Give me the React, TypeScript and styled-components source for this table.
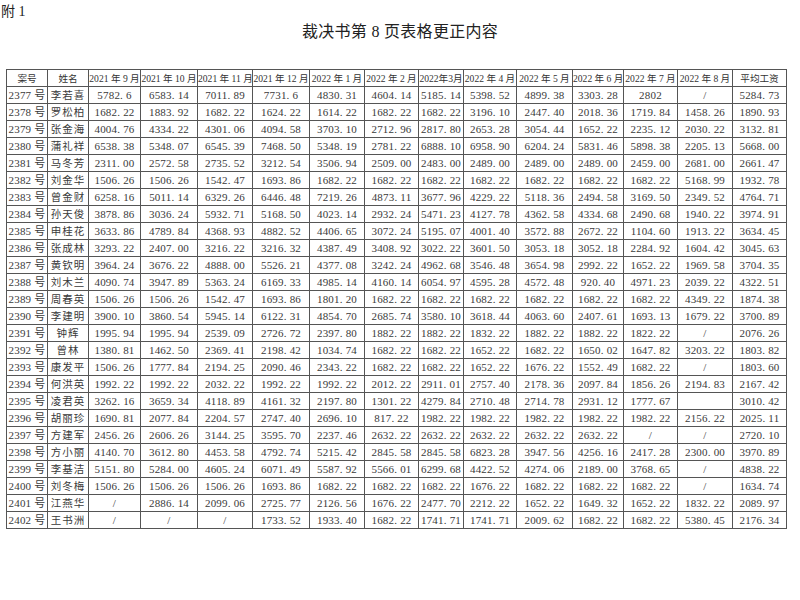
import React from "react";
import styled, { createGlobalStyle } from "styled-components";

const GlobalStyle = createGlobalStyle`
  html, body {
    margin: 0;
    padding: 0;
    background: #ffffff;
  }
  body {
    font-family: "Liberation Serif", "Noto Sans CJK SC", serif;
    color: #333;
  }
`;

const Page = styled.div`
  width: 800px;
  height: 600px;
  position: relative;
  overflow: hidden;
  background: #fff;
`;

const Annex = styled.div`
  font-size: 14px;
  line-height: 18px;
  padding: 3px 0 0 1px;
  height: 19px;
  color: #222;
`;

const Title = styled.h1`
  margin: 0;
  font-weight: normal;
  font-size: 16px;
  line-height: 20px;
  text-align: center;
  color: #222;
  letter-spacing: 0.3px;
`;

const TableWrap = styled.div`
  padding: 27px 0 0 6px;
`;

const Table = styled.table`
  border-collapse: collapse;
  table-layout: fixed;
  width: 780px;
`;

const Th = styled.th`
  border: 1px solid #555;
  height: 16px;
  padding: 0;
  font-weight: normal;
  font-size: 9.6px;
  line-height: 15px;
  text-align: center;
  white-space: nowrap;
  overflow: visible;
  color: #333;
`;

const Td = styled.td<{ $name?: boolean }>`
  border: 1px solid #555;
  height: 16px;
  padding: 0;
  font-size: ${(p) => (p.$name ? "10.5px" : "11px")};
  line-height: 15px;
  text-align: center;
  white-space: nowrap;
  color: #3a3a3a;
  letter-spacing: ${(p) => (p.$name ? "1px" : "0.2px")};
`;

const widths = [41, 41, 52, 57, 55, 57, 55, 54, 45, 53, 56, 51, 54, 55, 54];

const headers = [
  "案号",
  "姓名",
  "2021 年 9 月",
  "2021 年 10 月",
  "2021 年 11 月",
  "2021 年 12 月",
  "2022 年 1 月",
  "2022 年 2 月",
  "2022年3月",
  "2022 年 4 月",
  "2022 年 5 月",
  "2022 年 6 月",
  "2022 年 7 月",
  "2022 年 8 月",
  "平均工资",
];

const rows: string[][] = [
  ["2377", "李若喜", "5782.6", "6583.14", "7011.89", "7731.6", "4830.31", "4604.14", "5185.14", "5398.52", "4899.38", "3303.28", "2802", "/", "5284.73"],
  ["2378", "罗松柏", "1682.22", "1883.92", "1682.22", "1624.22", "1614.22", "1682.22", "1682.22", "3196.10", "2447.40", "2018.36", "1719.84", "1458.26", "1890.93"],
  ["2379", "张金海", "4004.76", "4334.22", "4301.06", "4094.58", "3703.10", "2712.96", "2817.80", "2653.28", "3054.44", "1652.22", "2235.12", "2030.22", "3132.81"],
  ["2380", "蒲礼祥", "6538.38", "5348.07", "6545.39", "7468.50", "5348.19", "2781.22", "6888.10", "6958.90", "6204.24", "5831.46", "5898.38", "2205.13", "5668.00"],
  ["2381", "马冬芳", "2311.00", "2572.58", "2735.52", "3212.54", "3506.94", "2509.00", "2483.00", "2489.00", "2489.00", "2489.00", "2459.00", "2681.00", "2661.47"],
  ["2382", "刘金华", "1506.26", "1506.26", "1542.47", "1693.86", "1682.22", "1682.22", "1682.22", "1682.22", "1682.22", "1682.22", "1682.22", "5168.99", "1932.78"],
  ["2383", "曾金财", "6258.16", "5011.14", "6329.26", "6446.48", "7219.26", "4873.11", "3677.96", "4229.22", "5118.36", "2494.58", "3169.50", "2349.52", "4764.71"],
  ["2384", "孙天俊", "3878.86", "3036.24", "5932.71", "5168.50", "4023.14", "2932.24", "5471.23", "4127.78", "4362.58", "4334.68", "2490.68", "1940.22", "3974.91"],
  ["2385", "申桂花", "3633.86", "4789.84", "4368.93", "4882.52", "4406.65", "3072.24", "5195.07", "4001.40", "3572.88", "2672.22", "1104.60", "1913.22", "3634.45"],
  ["2386", "张成林", "3293.22", "2407.00", "3216.22", "3216.32", "4387.49", "3408.92", "3022.22", "3601.50", "3053.18", "3052.18", "2284.92", "1604.42", "3045.63"],
  ["2387", "黄钦明", "3964.24", "3676.22", "4888.00", "5526.21", "4377.08", "3242.24", "4962.68", "3546.48", "3654.98", "2992.22", "1652.22", "1969.58", "3704.35"],
  ["2388", "刘木兰", "4090.74", "3947.89", "5363.24", "6169.33", "4985.14", "4160.14", "6054.97", "4595.28", "4572.48", "920.40", "4971.23", "2039.22", "4322.51"],
  ["2389", "周春英", "1506.26", "1506.26", "1542.47", "1693.86", "1801.20", "1682.22", "1682.22", "1682.22", "1682.22", "1682.22", "1682.22", "4349.22", "1874.38"],
  ["2390", "李建明", "3900.10", "3860.54", "5945.14", "6122.31", "4854.70", "2685.74", "3580.10", "3618.44", "4063.60", "2407.61", "1693.13", "1679.22", "3700.89"],
  ["2391", "钟辉", "1995.94", "1995.94", "2539.09", "2726.72", "2397.80", "1882.22", "1882.22", "1832.22", "1882.22", "1882.22", "1822.22", "/", "2076.26"],
  ["2392", "曾林", "1380.81", "1462.50", "2369.41", "2198.42", "1034.74", "1682.22", "1682.22", "1652.22", "1682.22", "1650.02", "1647.82", "3203.22", "1803.82"],
  ["2393", "康发平", "1506.26", "1777.84", "2194.25", "2090.46", "2343.22", "1682.22", "1682.22", "1652.22", "1676.22", "1552.49", "1682.22", "/", "1803.60"],
  ["2394", "何洪英", "1992.22", "1992.22", "2032.22", "1992.22", "1992.22", "2012.22", "2911.01", "2757.40", "2178.36", "2097.84", "1856.26", "2194.83", "2167.42"],
  ["2395", "凌君英", "3262.16", "3659.34", "4118.89", "4161.32", "2197.80", "1301.22", "4279.84", "2710.48", "2714.78", "2931.12", "1777.67", "", "3010.42"],
  ["2396", "胡丽珍", "1690.81", "2077.84", "2204.57", "2747.40", "2696.10", "817.22", "1982.22", "1982.22", "1982.22", "1982.22", "1982.22", "2156.22", "2025.11"],
  ["2397", "方建军", "2456.26", "2606.26", "3144.25", "3595.70", "2237.46", "2632.22", "2632.22", "2632.22", "2632.22", "2632.22", "/", "/", "2720.10"],
  ["2398", "方小丽", "4140.70", "3612.80", "4453.58", "4792.74", "5215.42", "2845.58", "2845.58", "6823.28", "3947.56", "4256.16", "2417.28", "2300.00", "3970.89"],
  ["2399", "李基洁", "5151.80", "5284.00", "4605.24", "6071.49", "5587.92", "5566.01", "6299.68", "4422.52", "4274.06", "2189.00", "3768.65", "/", "4838.22"],
  ["2400", "刘冬梅", "1506.26", "1506.26", "1506.26", "1693.86", "1682.22", "1682.22", "1682.22", "1676.22", "1682.22", "1682.22", "1682.22", "/", "1634.74"],
  ["2401", "江燕华", "/", "2886.14", "2099.06", "2725.77", "2126.56", "1676.22", "2477.70", "2212.22", "1652.22", "1649.32", "1652.22", "1832.22", "2089.97"],
  ["2402", "王书洲", "/", "/", "/", "1733.52", "1933.40", "1682.22", "1741.71", "1741.71", "2009.62", "1682.22", "1682.22", "5380.45", "2176.34"],
];

// "." in the scan sits like ", " so give numbers a little room
const fmt = (v: string) => v.replace(".", ". ");

export default function App() {
  return (
    <Page>
      <GlobalStyle />
      <Annex>附 1</Annex>
      <Title>裁决书第 8 页表格更正内容</Title>
      <TableWrap>
        <Table>
          <colgroup>
            {widths.map((w, i) => (
              <col key={i} style={{ width: w }} />
            ))}
          </colgroup>
          <thead>
            <tr>
              {headers.map((h) => (
                <Th key={h}>{h}</Th>
              ))}
            </tr>
          </thead>
          <tbody>
            {rows.map((r) => (
              <tr key={r[0]}>
                <Td>{r[0]} 号</Td>
                <Td $name>{r[1]}</Td>
                {r.slice(2).map((v, i) => (
                  <Td key={i}>{fmt(v)}</Td>
                ))}
              </tr>
            ))}
          </tbody>
        </Table>
      </TableWrap>
    </Page>
  );
}
